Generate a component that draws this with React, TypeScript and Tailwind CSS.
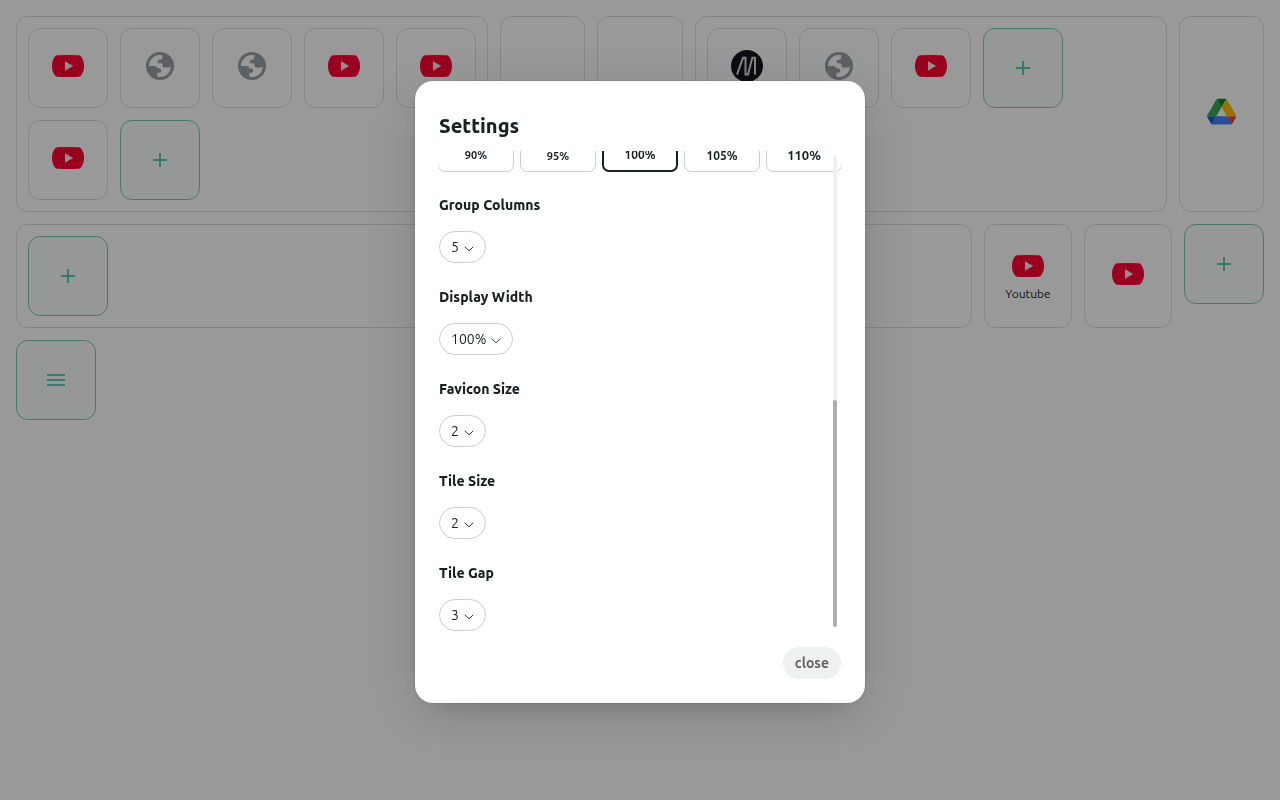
import { useId, useState } from "react";
import type { ReactNode } from "react";
import { MdAdd, MdMenu } from "react-icons/md";

type Site = "youtube" | "globe" | "mono" | "drive";

const LEFT_GROUP: Site[] = ["youtube", "globe", "globe", "youtube", "youtube", "youtube"];
const RIGHT_GROUP: Site[] = ["mono", "globe", "youtube"];

const SCALES = [
  { value: "90%", size: "text-[11px]" },
  { value: "95%", size: "text-[11px] pt-[2px]" },
  { value: "100%", size: "text-[12px]" },
  { value: "105%", size: "text-[12px] pt-[2px]" },
  { value: "110%", size: "text-[13px] pt-[2px]" },
];

const FIELDS = [
  { label: "Group Columns", value: "5", options: ["3", "4", "5", "6"] },
  { label: "Display Width", value: "100%", options: ["80%", "90%", "100%"] },
  { label: "Favicon Size", value: "2", options: ["1", "2", "3"] },
  { label: "Tile Size", value: "2", options: ["1", "2", "3"] },
  { label: "Tile Gap", value: "3", options: ["1", "2", "3", "4"] },
];

function YoutubeIcon() {
  return (
    <svg viewBox="0 0 32 32" className="size-8">
      <path d="M5.500 5.200Q16 4.600 26.500 5.200C29.500 5.500 32 10.500 32 16S29.500 26.500 26.500 26.800Q16 27.400 5.500 26.800C2.500 26.500 0 21.500 0 16S2.500 5.500 5.500 5.200Z" fill="#ff0033" />
      <path d="M13 11.300 21.200 16 13 20.700Z" fill="#fde8ec" />
    </svg>
  );
}

function GlobeIcon() {
  return (
    <svg viewBox="0 0 32 32" className="size-8">
      <circle cx="16" cy="16" r="14" fill="#9aa0a6" />
      <path
        d="M5 16A11 11 0 0 1 16 5L18.300 5.200V7.300C18.300 9 17.300 9.800 15.800 9.800C14.400 9.800 13.800 10.400 13.800 11.500V13.300H17C18 13.300 18.500 14 18.500 15.200C18.500 16.800 19.500 17.500 21 17.500H24.500C25.500 17.500 26.500 17 27 16A11 11 0 0 1 13.400 26.700V22.700H15C16.500 22.700 17.200 22 17.200 20.700C17.200 18.800 15.800 18.300 13 18.300C13 16.800 12.500 16 10.500 16Z"
        fill="#fff"
      />
    </svg>
  );
}

function MonoIcon() {
  return (
    <svg viewBox="0 0 32 32" className="size-8">
      <circle cx="16" cy="16" r="16" fill="#14141c" />
      <path d="M6 24.500 12 7.800H14.500V24.500H17L21.300 7.800H24V24.500" fill="none" stroke="#ddd" strokeWidth="2" />
    </svg>
  );
}

function DriveIcon() {
  return (
    <svg viewBox="-6.500 -8 96.300 96.300" className="size-8">
      <path d="M6.600 66.850 10.450 73.500C11.250 74.900 12.400 76 13.750 76.800L27.500 53H0C0 54.550.4 56.100 1.200 57.500Z" fill="#0066da" />
      <path d="M43.650 25 29.900 1.200C28.550 2 27.400 3.100 26.600 4.500L1.200 48.500A9 9 0 0 0 0 53H27.500Z" fill="#34a853" />
      <path d="M73.550 76.800C74.900 76 76.050 74.900 76.850 73.500L86.100 57.500C86.900 56.100 87.300 54.550 87.300 53H59.800L65.650 64.500Z" fill="#ea4335" />
      <path d="M43.650 25 57.400 1.200C56.050.4 54.500 0 52.900 0H34.400C32.800 0 31.250.45 29.900 1.200Z" fill="#00832d" />
      <path d="M59.800 53H27.500L13.750 76.800C15.100 77.600 16.650 78 18.250 78H69.050C70.650 78 72.200 77.550 73.550 76.800Z" fill="#4285f4" />
      <path d="M73.400 26.500 60.700 4.500C59.900 3.100 58.750 2 57.400 1.200L43.650 25 59.800 53H87.250C87.250 51.450 86.850 49.900 86.050 48.500Z" fill="#ffba00" />
    </svg>
  );
}

const SITE_ICONS: Record<Site, { name: string; icon: ReactNode }> = {
  youtube: { name: "YouTube", icon: <YoutubeIcon /> },
  globe: { name: "Website", icon: <GlobeIcon /> },
  mono: { name: "M", icon: <MonoIcon /> },
  drive: { name: "Drive", icon: <DriveIcon /> },
};

function Tile({ site, label, className }: { site: Site; label?: string; className: string }) {
  const { name, icon } = SITE_ICONS[site];
  return (
    <a
      href="#"
      aria-label={label ?? name}
      className={`flex flex-col items-center justify-center rounded-xl border border-[#dcdfde] text-xs ${className}`}
    >
      <span className="mb-1">{icon}</span>
      {label}
    </a>
  );
}

function ActionTile({ label, children }: { label: string; children: ReactNode }) {
  return (
    <button
      aria-label={label}
      className="flex size-20 shrink-0 items-center justify-center rounded-xl border border-[#82c8b5] bg-[#f9fdfb] text-2xl text-[#62c6b4]"
    >
      {children}
    </button>
  );
}

function Group({ sites, className }: { sites: Site[]; className: string }) {
  return (
    <section className={`flex flex-wrap content-start gap-3 rounded-xl border border-[#dcdfde] p-[11px] ${className}`}>
      {sites.map((site, i) => <Tile key={i} site={site} className="size-20" />)}
      <ActionTile label="Add tile"><MdAdd /></ActionTile>
    </section>
  );
}

function SelectField({ label, value, options }: { label: string; value: string; options: string[] }) {
  const id = useId();
  return (
    <div className="flex flex-col items-start gap-4">
      <label htmlFor={id} className="text-sm font-extrabold">{label}</label>
      <div className="relative">
        <select
          id={id}
          defaultValue={value}
          className="field-sizing-content h-8 appearance-none rounded-full border border-[#cbcfcd] bg-white pr-[26px] pl-[11px] text-sm"
        >
          {options.map(o => <option key={o}>{o}</option>)}
        </select>
        <svg viewBox="0 0 10 6" className="pointer-events-none absolute top-[15px] right-[12px] h-[6px] w-[10px]">
          <path d="M.7.700 5 4.800 9.300.7" fill="none" stroke="#1a211e" strokeWidth=".9" />
        </svg>
      </div>
    </div>
  );
}

function SettingsDialog() {
  const [scale, setScale] = useState("100%");

  return (
    <div className="fixed inset-0 flex items-center justify-center bg-black/40 pb-4">
      <div
        role="dialog"
        aria-labelledby="settings-title"
        className="w-full max-w-[450px] rounded-[18px] bg-white p-6 shadow-[0_0_0_1px_rgba(0,0,0,0.08),0_12px_60px_rgba(0,0,0,0.15),0_12px_32px_-16px_rgba(0,20,10,0.2)]"
      >
        <h2 id="settings-title" className="pt-[5px] pb-[9px] text-xl leading-8 font-extrabold">Settings</h2>

        <div className="relative flex h-[60vh] flex-col justify-end gap-6 overflow-hidden">
          <div className="grid shrink-0 grid-cols-5 gap-2">
            {SCALES.map(s => (
              <button
                key={s.value}
                onClick={() => setScale(s.value)}
                className={`h-8 rounded-md font-semibold ${s.size} ${
                  s.value === scale ? "outline-2 -outline-offset-1 outline-[#1a211e]" : "outline-1 outline-[#cbcfcd]"
                }`}
              >
                {s.value}
              </button>
            ))}
          </div>

          {FIELDS.map(f => <SelectField key={f.label} {...f} />)}

          {/* Scrollbar */}
          <div className="absolute inset-y-1 right-1 flex w-1 flex-col justify-end rounded-full bg-[#eef1f0]">
            <div className="h-[48%] rounded-full bg-[#a9b1ae]" />
          </div>
        </div>

        <div className="mt-4 flex justify-end">
          <button className="h-8 rounded-full bg-[#eef1f0] px-3 text-sm font-semibold text-[#5f6563]">close</button>
        </div>
      </div>
    </div>
  );
}

export default function App() {
  return (
    <div className="min-h-screen bg-white font-[Ubuntu,'Noto_Sans',sans-serif] text-[#1a211e]">
      <main className="flex flex-col gap-3 p-4">
        <div className="flex gap-3">
          <Group sites={LEFT_GROUP} className="w-[472px] shrink-0" />
          <div className="flex-1 rounded-xl border border-[#dcdfde]" />
          <div className="flex-1 rounded-xl border border-[#dcdfde]" />
          <Group sites={RIGHT_GROUP} className="w-[472px] shrink-0" />
          <Tile site="drive" className="flex-1" />
        </div>

        <div className="flex gap-3">
          <Group sites={[]} className="flex-1" />
          <Tile site="youtube" label="Youtube" className="w-22" />
          <Tile site="youtube" className="w-22" />
          <ActionTile label="Add group"><MdAdd /></ActionTile>
        </div>

        <ActionTile label="Menu"><MdMenu /></ActionTile>
      </main>

      <SettingsDialog />
    </div>
  );
}
